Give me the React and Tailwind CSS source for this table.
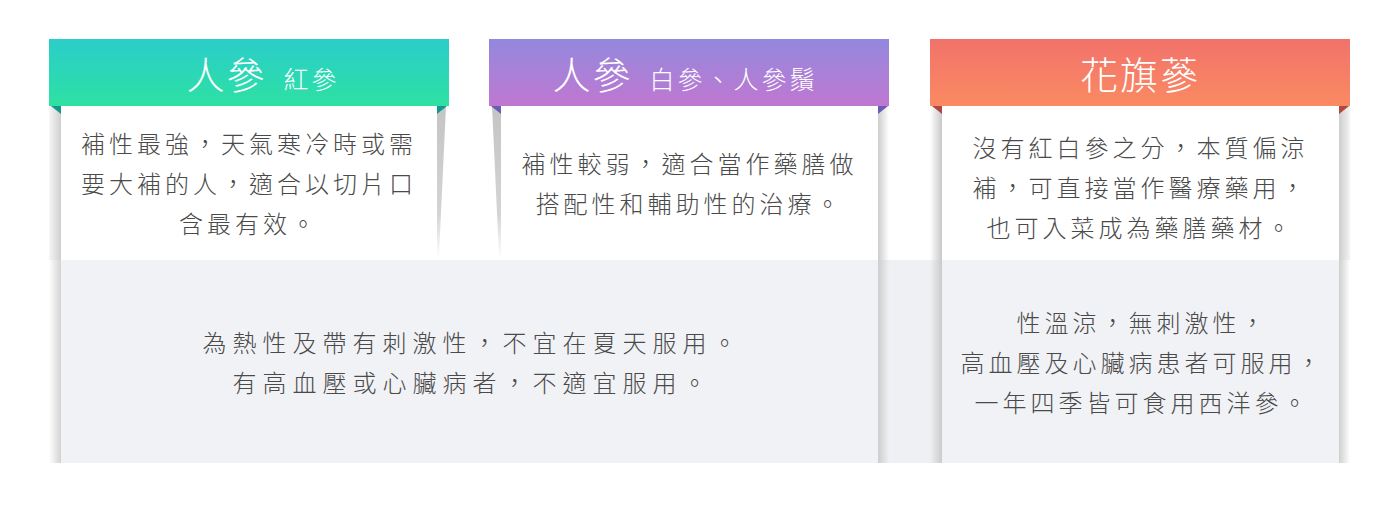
import React from 'react'

const cols = [
  {
    title: '人參',
    sub: '紅參',
    head: 'bg-linear-to-b from-[#2bcdc9] to-[#2ee1a2] pl-[28px]',
    fold: 'bg-[#14978c]',
    top: ['補性最強，天氣寒冷時或需', '要大補的人，適合以切片口', '含最有效。'],
  },
  {
    title: '人參',
    sub: '白參、人參鬚',
    head: 'bg-linear-to-b from-[#9288dd] to-[#bf77d1] pr-[8px]',
    fold: 'bg-[#6a5cb6]',
    top: ['補性較弱，適合當作藥膳做', '搭配性和輔助性的治療。'],
  },
  {
    title: '花旗蔘',
    sub: '',
    head: 'bg-linear-to-b from-[#f2726b] to-[#fa8a61]',
    fold: 'bg-[#b0463f]',
    top: ['沒有紅白參之分，本質偏涼', '補，可直接當作醫療藥用，', '也可入菜成為藥膳藥材。'],
  },
]

function Header({ c, place }) {
  return (
    <div className={`${place} ${c.head} flex items-center justify-center`}>
      <div className="flex items-baseline gap-[17px] text-white font-light">
        <span className="text-[38px] tracking-[2px] leading-none">{c.title}</span>
        {c.sub && <span className="text-[25px] tracking-[3px] leading-none">{c.sub}</span>}
      </div>
    </div>
  )
}

function Fold({ side, color }) {
  // little folded corner under the ribbon
  const shape = side === 'left'
    ? 'right-0 [clip-path:polygon(0_0,100%_0,100%_100%)]'
    : 'left-0 [clip-path:polygon(0_0,100%_0,0_100%)]'
  return <div className={`absolute top-0 w-[10px] h-[8px] ${shape} ${color}`} />
}

function Taper({ side }) {
  // curled shadow that thins out toward the bottom
  const id = `tp-${side}`
  const pts = side === 'right' ? '0,0 9,0 2,150 0,154' : '3,0 12,0 12,154 10,150'
  return (
    <svg width="12" height="154" className="block">
      <defs>
        <linearGradient id={id} x1="0" y1="0" x2="0" y2="1">
          <stop offset="0" stopColor="#c4c4c4" />
          <stop offset="0.7" stopColor="#d4d4d4" />
          <stop offset="1" stopColor="#ffffff" />
        </linearGradient>
      </defs>
      <polygon points={pts} fill={`url(#${id})`} />
    </svg>
  )
}

function Lines({ lines, className }) {
  return (
    <p className={className}>
      {lines.map((l, i) => (
        <React.Fragment key={i}>
          {l}
          {i < lines.length - 1 && <br />}
        </React.Fragment>
      ))}
    </p>
  )
}

export default function App() {
  const body = "text-center text-[24px] leading-[40px] tracking-[4px] text-[#4a4a4a] font-light"
  const bottom = "text-center text-[24px] leading-[40px] text-[#4a4a4a] font-light"

  return (
    <div className="w-[1400px] h-[510px] bg-white font-['Noto_Sans_CJK_TC',sans-serif] pt-[39px] pl-[49px]">
      <div className="grid grid-cols-[12px_376px_12px_40px_12px_377px_11px_41px_12px_397px_11px] grid-rows-[67px_154px_203px]">
        <Header c={cols[0]} place="col-start-1 col-span-3 row-start-1" />
        <Header c={cols[1]} place="col-start-5 col-span-3 row-start-1" />
        <Header c={cols[2]} place="col-start-9 col-span-3 row-start-1" />

        {/* middle row */}
        <div className="relative row-start-2 col-start-1 bg-linear-to-r from-[#f6f6f6] to-[#cfcfcf]">
          <Fold side="left" color={cols[0].fold} />
        </div>
        <div className="row-start-2 col-start-2 bg-white flex items-center justify-center">
          <Lines lines={cols[0].top} className={body} />
        </div>
        <div className="relative row-start-2 col-start-3">
          <Taper side="right" />
          <Fold side="right" color={cols[0].fold} />
        </div>
        <div className="row-start-2 col-start-4 bg-white" />
        <div className="relative row-start-2 col-start-5">
          <Taper side="left" />
          <Fold side="left" color={cols[1].fold} />
        </div>
        <div className="row-start-2 col-start-6 bg-white flex items-center justify-center">
          <Lines lines={cols[1].top} className={body} />
        </div>
        <div className="relative row-start-2 col-start-7 bg-linear-to-r from-[#cdcdcd] to-[#ffffff]">
          <Fold side="right" color={cols[1].fold} />
        </div>
        <div className="row-start-2 col-start-8 bg-white" />
        <div className="relative row-start-2 col-start-9 bg-linear-to-r from-[#ffffff] to-[#c9c9c9]">
          <Fold side="left" color={cols[2].fold} />
        </div>
        <div className="row-start-2 col-start-10 bg-white flex items-center justify-center pt-[8px]">
          <Lines lines={cols[2].top} className={body} />
        </div>
        <div className="relative row-start-2 col-start-11 bg-linear-to-r from-[#cdcdcd] to-[#f4f4f4]">
          <Fold side="right" color={cols[2].fold} />
        </div>

        {/* bottom row */}
        <div className="row-start-3 col-start-1 bg-linear-to-r from-[#ffffff] to-[#d3d3d3]" />
        <div className="row-start-3 col-start-2 col-span-5 bg-[#f1f2f6] flex items-center justify-center">
          <Lines
            lines={['為熱性及帶有刺激性，不宜在夏天服用。', '有高血壓或心臟病者，不適宜服用。']}
            className={`${bottom} tracking-[6px] pl-[6px]`}
          />
        </div>
        <div className="row-start-3 col-start-7 bg-linear-to-r from-[#cdcdcd] to-[#eef0f3]" />
        <div className="row-start-3 col-start-8 bg-[#eff0f4]" />
        <div className="row-start-3 col-start-9 bg-linear-to-r from-[#eef0f3] to-[#cbcbcb]" />
        <div className="row-start-3 col-start-10 bg-[#f1f2f6] flex items-center justify-center">
          <Lines
            lines={['性溫涼，無刺激性，', '高血壓及心臟病患者可服用，', '一年四季皆可食用西洋參。']}
            className={`${bottom} tracking-[4px] pl-[4px]`}
          />
        </div>
        <div className="row-start-3 col-start-11 bg-linear-to-r from-[#cfcfcf] to-[#ffffff]" />
      </div>
    </div>
  )
}
